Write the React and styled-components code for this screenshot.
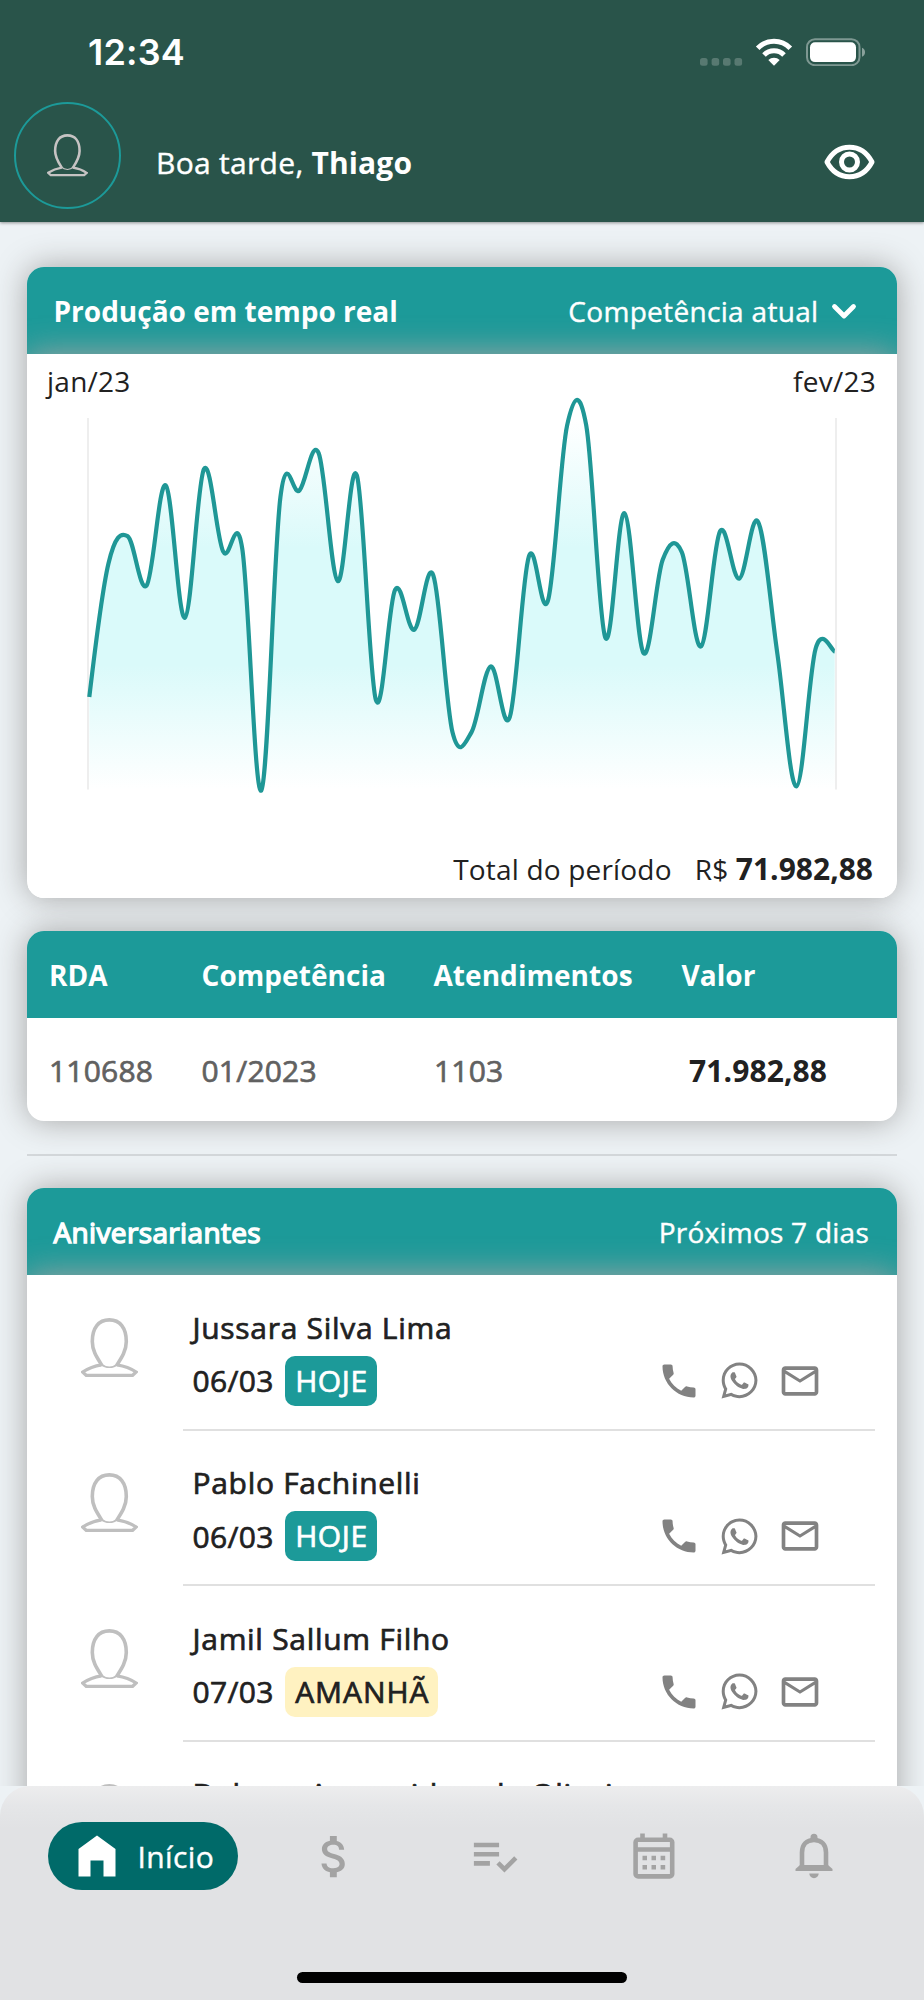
import React from 'react';
import styled, { createGlobalStyle } from 'styled-components';
import { MdLocalPhone, MdOutlineEmail, MdAttachMoney, MdPlaylistAddCheck } from 'react-icons/md';
import { FaWhatsapp } from 'react-icons/fa';

const series = [
  696.7, 563.3, 535.7, 585, 485, 617.3, 468.7, 551, 548, 790,
  496.7, 490, 452.7, 580.7, 475, 700, 589.3, 629.3, 575, 731.7,
  731.7, 666, 716.7, 556, 600, 425, 425, 637.3, 512.7, 652.7,
  559.3, 551.7, 646, 531, 578.3, 521.7, 653.3, 786, 648.3, 651,
];

const birthdays = [
  { name: 'Jussara Silva Lima', date: '06/03', when: 'HOJE', today: true },
  { name: 'Pablo Fachinelli', date: '06/03', when: 'HOJE', today: true },
  { name: 'Jamil Sallum Filho', date: '07/03', when: 'AMANHÃ' },
  { name: 'Debora Aparecida\u2003de Oliveira' },
];

const SMOOTHNESS = 0.35;

function curve(points) {
  let d = `M${points[0][0]} ${points[0][1]}`;
  let temp = [0, 0];
  for (let i = 1; i < points.length; i++) {
    const prev = points[i - 1];
    const cur = points[i];
    const next = points[i + 1] || cur;
    const c1 = [prev[0] + temp[0], prev[1] + temp[1]];
    temp = [((next[0] - prev[0]) / 2) * SMOOTHNESS, ((next[1] - prev[1]) / 2) * SMOOTHNESS];
    d += `C${c1[0]} ${c1[1]} ${cur[0] - temp[0]} ${cur[1] - temp[1]} ${cur[0]} ${cur[1]}`;
  }
  return d;
}

const GlobalStyle = createGlobalStyle`
  * {
    box-sizing: border-box;
  }
  body {
    margin: 0;
    background: #edf2f5;
    font-family: 'Open Sans', 'Noto Sans', sans-serif;
    color: #212121;
  }
`;

const PersonIcon = ({ width, color }) => (
  <svg width={width} height={(width * 60) / 57} viewBox="0 0 57 60" fill="none" stroke={color} strokeWidth="3.6">
    <path d="M21 47.5C16 39.500 11.300 33 11.300 23.500C11.300 10 17.600 1.900 28.300 1.900S45.300 10 45.300 23.500C45.300 33 40.500 40 35.600 47.500" />
    <path d="M19.500 46C25 50.300 32 50.300 37 46" strokeWidth="1.700" />
    <path d="M20.500 46.800C13 48 7 50.500 1.600 54L5.200 57.300H51.600L55.200 54C50 50.500 43.500 48 36 46.800" strokeWidth="3.200" />
  </svg>
);

const Chart = () => {
  const step = 745.4 / (series.length - 1);
  const points = series.map((y, i) => [62.3 + i * step, y - 353.6]);
  const line = curve(points);
  return (
    <ChartSvg viewBox="0 0 870 480">
      <defs>
        <linearGradient id="area" gradientUnits="userSpaceOnUse" x1="0" y1="46" x2="0" y2="436">
          <stop offset="0.05" stopColor="#dafafa" stopOpacity="0" />
          <stop offset="0.38" stopColor="#dafafa" />
          <stop offset="0.68" stopColor="#dafafa" />
          <stop offset="1" stopColor="#dafafa" stopOpacity="0" />
        </linearGradient>
      </defs>
      <path d="M61 64V435.500M809 64V435.500" stroke="#eeeeee" strokeWidth="2" />
      <path d={`${line}V436H62.3Z`} fill="url(#area)" />
      <path d={line} fill="none" stroke="#1f9796" strokeWidth="4.200" />
    </ChartSvg>
  );
};

const App = () => (
  <>
    <GlobalStyle />
    <Screen>
      <TopBar>
        <StatusBar>
          <Clock>12:34</Clock>
          <svg width="166" height="28" viewBox="0 0 166 28">
            <g fill="#fff" fillOpacity="0.22">
              <rect x="0" y="20" width="7.600" height="7.800" rx="2.500" />
              <rect x="11.600" y="20" width="7.600" height="7.800" rx="2.500" />
              <rect x="23" y="20" width="7.600" height="7.800" rx="2.500" />
              <rect x="34.500" y="20" width="7.600" height="7.800" rx="2.500" />
            </g>
            <g fill="none" stroke="#fff" strokeWidth="5">
              <path d="M57.700 10.300A22.500 22.500 0 0 1 90.300 10.300" />
              <path d="M64 17A14 14 0 0 1 84 17" />
            </g>
            <path d="M74 27.700L68.300 22A8.200 8.200 0 0 1 79.700 22Z" fill="#fff" />
            <rect x="107" y="1.200" width="52.500" height="26" rx="8" fill="none" stroke="#fff" strokeOpacity="0.4" strokeWidth="2" />
            <rect x="110" y="4.300" width="46" height="19.800" rx="5" fill="#fff" />
            <path d="M162 9.700C166 11.200 166 17.200 162 18.700Z" fill="#fff" fillOpacity="0.45" />
          </svg>
        </StatusBar>
        <Greeting>
          <Avatar>
            <PersonIcon width={41} color="#c6c3c3" />
          </Avatar>
          <Hello>
            Boa tarde, <strong>Thiago</strong>
          </Hello>
          <EyeIcon width="51" height="36" viewBox="0 0 51 36">
            <path d="M3 18C8 8.500 16 3.200 25.500 3.200S43 8.500 48 18C43 27.500 35 32.700 25.500 32.700S8 27.500 3 18Z" strokeLinejoin="round" />
            <circle cx="25.500" cy="18" r="8" />
          </EyeIcon>
        </Greeting>
      </TopBar>

      <Content>
        <Card $height={631}>
          <CardHeader>
            <CardTitle>Produção em tempo real</CardTitle>
            <Period>
              Competência atual
              <svg width="26" height="18" viewBox="0 0 26 18" fill="none" stroke="#fff" strokeWidth="4.800" strokeLinecap="round" strokeLinejoin="round">
                <path d="M3.500 4.500L13 14L22.500 4.500" />
              </svg>
            </Period>
          </CardHeader>
          <CardBody>
            <Months>
              <span>jan/23</span>
              <span>fev/23</span>
            </Months>
            <Chart />
            <Total>
              <span>Total do período</span>
              <span>
                R$ <Amount>71.982,88</Amount>
              </span>
            </Total>
          </CardBody>
        </Card>

        <Card $height={190}>
          <TableHead>
            <span>RDA</span>
            <span>Competência</span>
            <span>Atendimentos</span>
            <span>Valor</span>
          </TableHead>
          <TableRow>
            <span>110688</span>
            <span>01/2023</span>
            <span>1103</span>
            <strong>71.982,88</strong>
          </TableRow>
        </Card>

        <Divider />

        <Card $height={760}>
          <CardHeader>
            <ListTitle>Aniversariantes</ListTitle>
            <Days>Próximos 7 dias</Days>
          </CardHeader>
          <CardBody>
            {birthdays.map((person) => (
              <Person key={person.name}>
                <PersonIcon width={57} color="#bfbfbf" />
                <Info>
                  <Name>{person.name}</Name>
                  {person.date && (
                    <DateRow>
                      {person.date}
                      <Badge $today={person.today}>{person.when}</Badge>
                      <Actions>
                        <MdLocalPhone size={44} />
                        <FaWhatsapp size={41} />
                        <MdOutlineEmail size={44} />
                      </Actions>
                    </DateRow>
                  )}
                </Info>
              </Person>
            ))}
          </CardBody>
        </Card>
      </Content>

      <NavBar>
        <Tabs>
          <ActiveTab>
            <svg width="38" height="42" viewBox="0 0 38 42">
              <path d="M0.500 14L19 0.500L37.500 14V41.500H25.500V25.500H12.500V41.500H0.500Z" fill="#fff" />
            </svg>
            Início
          </ActiveTab>
          <Tab>
            <MdAttachMoney size={55} />
          </Tab>
          <Tab>
            <MdPlaylistAddCheck size={55} />
          </Tab>
          <Tab>
            <svg width="42" height="46" viewBox="0 0 42 46" fill="none" stroke="currentColor" strokeWidth="4.600">
              <rect x="2.600" y="6.800" width="36.600" height="36.600" rx="2.500" />
              <path d="M2.500 16.500H39M9.500 0.500V6M32 0.500V6" />
              <path d="M9.500 25H14M18.500 25H23M27.600 25H32.200M9.500 34.200H14M18.500 34.200H23M27.600 34.200H32.200" />
            </svg>
          </Tab>
          <Tab>
            <svg width="38" height="46" viewBox="0 0 38 46">
              <path d="M7 38V19.500C7 12 11.500 7 19 7S31 12 31 19.500V38" fill="none" stroke="currentColor" strokeWidth="4.600" />
              <path d="M15.500 6V4.300A3.500 3.500 0 0 1 22.500 4.300V6ZM0.500 36L5 32H33L37.500 36V38H0.500ZM14.300 40.500H23.700A4.700 4.700 0 0 1 14.300 40.500Z" fill="currentColor" />
            </svg>
          </Tab>
        </Tabs>
        <HomeIndicator />
      </NavBar>
    </Screen>
  </>
);

const Screen = styled.div`
  width: 924px;
  height: 2000px;
  display: flex;
  flex-direction: column;
  overflow: hidden;
`;

const TopBar = styled.header`
  height: 222px;
  flex-shrink: 0;
  background: #29544a;
  box-shadow: 0 1px 3px rgba(0, 0, 0, 0.4);
  z-index: 1;
`;

const StatusBar = styled.div`
  height: 101px;
  padding: 3px 58px 0 88px;
  display: flex;
  align-items: center;
  justify-content: space-between;
`;

const Clock = styled.div`
  font-family: 'Inter', sans-serif;
  font-size: 36px;
  font-weight: 600;
  letter-spacing: 0.2px;
  color: #fff;
`;

const Greeting = styled.div`
  display: flex;
  align-items: center;
  height: 109px;
  padding: 0 49px 0 13.5px;
`;

const Avatar = styled.div`
  width: 107.500px;
  height: 107.500px;
  border: 2px solid #1c9a99;
  border-radius: 50%;
  display: flex;
  align-items: center;
  justify-content: center;
`;

const Hello = styled.div`
  flex: 1;
  padding: 14px 0 0 35px;
  font-size: 30px;
  letter-spacing: 0.3px;
  -webkit-text-stroke: 0.4px;
  color: #fff;

  strong {
    letter-spacing: 0.1px;
    -webkit-text-stroke: 0;
  }
`;

const EyeIcon = styled.svg`
  margin-top: 12px;
  fill: none;
  stroke: #fff;
  stroke-width: 5px;
`;

const Content = styled.main`
  height: 1564px;
  flex-shrink: 0;
  padding: 45px 27px 0;
  overflow: hidden;
`;

const Card = styled.section`
  height: ${(props) => props.$height}px;
  margin-bottom: 33px;
  border-radius: 17px;
  background: #fff;
  box-shadow: 0 0 32px #a4a4a4;
  overflow: hidden;
`;

const CardHeader = styled.div`
  height: 87px;
  padding: 0 28px 0 26.500px;
  display: flex;
  align-items: center;
  justify-content: space-between;
  background: #1c9a99;
  color: #fff;
  font-size: 28px;
`;

const CardTitle = styled.div`
  font-weight: 700;
`;

// synthetic bold: regular glyphs with an outline
const ListTitle = styled.div`
  letter-spacing: 0.350px;
  -webkit-text-stroke: 1.400px;
`;

const Period = styled.div`
  display: flex;
  align-items: center;
  gap: 12.500px;
  padding-right: 12px;
  letter-spacing: 0.320px;
  -webkit-text-stroke: 0.4px;
`;

const Days = styled.div`
  letter-spacing: 0.250px;
  -webkit-text-stroke: 0.4px;
`;

const CardBody = styled.div`
  position: relative;
  background: #fff;
  box-shadow: 0 0 32px #a4a4a4;
`;

const Months = styled.div`
  display: flex;
  justify-content: space-between;
  height: 0;
  padding: 7px 21px 0 20px;
  font-size: 28px;
  line-height: 40px;
  letter-spacing: 0.250px;
`;

const ChartSvg = styled.svg`
  display: block;
  width: 870px;
  height: 480px;
  margin-top: -7px;
`;

const Total = styled.div`
  display: flex;
  justify-content: flex-end;
  align-items: baseline;
  gap: 23px;
  height: 71px;
  padding: 14.500px 24px 0 0;
  font-size: 28px;
  line-height: 40px;
  letter-spacing: 0.180px;
`;

const Amount = styled.strong`
  font-size: 30px;
  letter-spacing: 0;
`;

const TableHead = styled.div`
  display: grid;
  grid-template-columns: 152.500px 232px 248px 1fr;
  align-items: center;
  height: 87px;
  padding: 1px 0 0 22px;
  background: #1c9a99;
  color: #fff;
  font-size: 28px;
  font-weight: 700;
  letter-spacing: 0.050px;
`;

const TableRow = styled.div`
  display: grid;
  grid-template-columns: 152.500px 232.500px 255px 1fr;
  align-items: center;
  height: 103px;
  padding: 2px 0 0 22px;
  font-size: 30px;
  letter-spacing: 0.200px;
  -webkit-text-stroke: 0.700px;
  color: #616161;

  strong {
    font-weight: 700;
    -webkit-text-stroke: 0;
    letter-spacing: 0.1px;
    color: #212121;
  }
`;

const Divider = styled.hr`
  height: 2px;
  margin: 0 0 32px;
  border: 0;
  background: #d3d7da;
`;

const Person = styled.div`
  display: flex;
  height: 155.5px;
  padding: 42.5px 22px 0 54px;

  > svg {
    flex-shrink: 0;
  }
`;

const Info = styled.div`
  flex: 1;
  height: 113px;
  margin-left: 45px;
  padding-left: 9.500px;
  border-bottom: 2px solid #e0e0e0;
  font-size: 30px;
  letter-spacing: 0.300px;
  -webkit-text-stroke: 0.700px;
`;

const Name = styled.div`
  height: 37.5px;
  margin-top: -10px;
  line-height: 40px;
  letter-spacing: 0.700px;
  white-space: nowrap;
`;

const DateRow = styled.div`
  display: flex;
  align-items: center;
  height: 71px;
`;

const Badge = styled.span`
  height: 50px;
  margin-left: 11.500px;
  padding: 0 9px 0 10px;
  border-radius: 10px;
  line-height: 50px;
  letter-spacing: ${(props) => (props.$today ? '0.6px' : '0.95px')};
  color: ${(props) => (props.$today ? '#fff' : '#212121')};
  background: ${(props) => (props.$today ? '#1c9a99' : '#fff2c1')};
`;

const Actions = styled.div`
  display: flex;
  align-items: center;
  gap: 18px;
  margin-left: auto;
  padding-right: 53.500px;
  color: #828282;
`;

const NavBar = styled.nav`
  height: 214px;
  flex-shrink: 0;
  display: flex;
  flex-direction: column;
  align-items: center;
  justify-content: space-between;
  border-radius: 30px 30px 0 0;
  background: linear-gradient(#ededee, #e5e6e8 20px, #e1e2e4 42px);
`;

const Tabs = styled.div`
  width: 924px;
  display: grid;
  grid-template-columns: 254px 160px 160px 160px 160px;
  align-items: center;
  padding: 36px 0 0 0;
`;

const Tab = styled.div`
  display: flex;
  justify-content: center;
  color: #a3a3a3;
`;

const ActiveTab = styled.div`
  width: 190px;
  height: 68px;
  margin-left: 48px;
  padding-left: 30px;
  display: flex;
  align-items: center;
  gap: 21.500px;
  border-radius: 34px;
  background: #006a69;
  color: #fff;
  font-size: 30px;
  letter-spacing: 0.400px;
  -webkit-text-stroke: 0.4px;
`;

const HomeIndicator = styled.div`
  width: 330px;
  height: 11px;
  margin-bottom: 17px;
  border-radius: 6px;
  background: #000;
`;

export default App;
